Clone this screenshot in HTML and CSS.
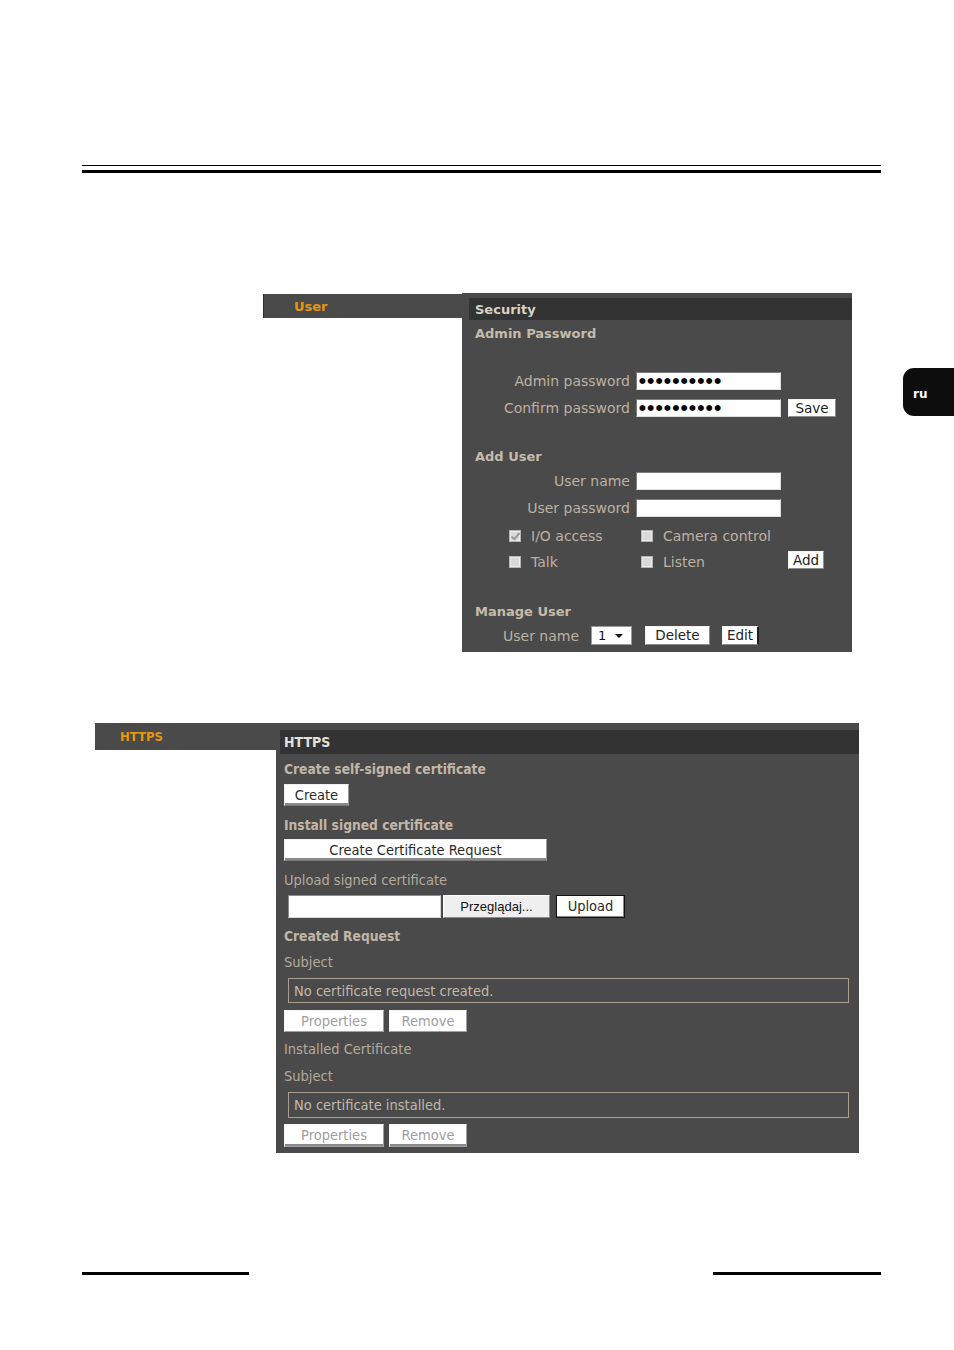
FILE: index.html
```html
<!DOCTYPE html>
<html lang="pl">
<head>
<meta charset="utf-8">
<title>Security / HTTPS</title>
<link rel="stylesheet" href="styles.css">
</head>
<body>
<div class="page">
  <div class="rule-top">
    <div class="rule-thin"></div>
    <div class="rule-thick"></div>
  </div>

  <div class="lang-tab">ru</div>

  <!-- User settings -->
  <div class="fig fig-user">
    <div class="tab tab-user">User</div>
    <div class="panel panel-user">
      <div class="bar bar-user">Security</div>
      <div class="u-title u-title-admin">Admin Password</div>

      <div class="frow frow-admin">
        <span class="lbl">Admin password</span>
        <span class="field pw">●●●●●●●●●●</span>
      </div>
      <div class="frow frow-confirm">
        <span class="lbl">Confirm password</span>
        <span class="field pw">●●●●●●●●●●</span>
        <span class="btn btn-save">Save</span>
      </div>

      <div class="u-title u-title-add">Add User</div>
      <div class="frow frow-uname">
        <span class="lbl">User name</span>
        <span class="field"></span>
      </div>
      <div class="frow frow-upass">
        <span class="lbl">User password</span>
        <span class="field"></span>
      </div>

      <div class="crow crow-1">
        <span class="citem"><span class="chk checked"></span><span class="ctext">I/O access</span></span>
        <span class="citem"><span class="chk"></span><span class="ctext">Camera control</span></span>
      </div>
      <div class="crow crow-2">
        <span class="citem"><span class="chk"></span><span class="ctext">Talk</span></span>
        <span class="citem citem-short"><span class="chk"></span><span class="ctext">Listen</span></span>
        <span class="btn btn-add">Add</span>
      </div>

      <div class="u-title u-title-manage">Manage User</div>
      <div class="mrow">
        <span class="mlbl">User name</span>
        <span class="select"><span class="sel-val">1</span><span class="sel-arrow"></span></span>
        <span class="btn btn-delete">Delete</span>
        <span class="btn btn-edit">Edit</span>
      </div>
    </div>
  </div>

  <!-- HTTPS settings -->
  <div class="fig fig-https">
    <div class="tab tab-https">HTTPS</div>
    <div class="panel panel-https">
      <div class="bar bar-https">HTTPS</div>
      <div class="h-body">
        <div class="h-title h-t1">Create self-signed certificate</div>
        <div class="hbtn hbtn-create">Create</div>
        <div class="h-title h-t2">Install signed certificate</div>
        <div class="hbtn hbtn-ccr">Create Certificate Request</div>
        <div class="h-text h-upload">Upload signed certificate</div>
        <div class="file-row">
          <span class="file-field"></span>
          <span class="file-browse">Przeglądaj...</span>
          <span class="hbtn hbtn-upload">Upload</span>
        </div>
        <div class="h-title h-t3">Created Request</div>
        <div class="h-text h-subj1">Subject</div>
        <div class="subject-box">No certificate request created.</div>
        <div class="pr-row pr-row-1">
          <span class="hbtn dis dis-props">Properties</span>
          <span class="hbtn dis dis-remove">Remove</span>
        </div>
        <div class="h-text h-installed">Installed Certificate</div>
        <div class="h-text h-subj2">Subject</div>
        <div class="subject-box subject-box-2">No certificate installed.</div>
        <div class="pr-row pr-row-2">
          <span class="hbtn dis dis-props lined">Properties</span>
          <span class="hbtn dis dis-remove lined">Remove</span>
        </div>
      </div>
    </div>
  </div>

  <div class="rule-bottom">
    <div class="rb rb-left"></div>
    <div class="rb rb-right"></div>
  </div>
</div>
</body>
</html>
```

FILE: styles.css
```css
html, body {
  margin: 0;
  padding: 0;
  background: #ffffff;
}

.page {
  position: relative;
  width: 954px;
  height: 1350px;
  overflow: hidden;
  font-family: "DejaVu Sans", Verdana, sans-serif;
}

/* header rules */
.rule-top {
  margin: 165px 0 0 82px;
  width: 799px;
}
.rule-thin {
  height: 1px;
  background: #000;
}
.rule-thick {
  height: 3px;
  margin-top: 4px;
  background: #000;
}

/* language tab on the right edge */
.lang-tab {
  position: absolute;
  left: 903px;
  top: 368px;
  width: 51px;
  height: 48px;
  box-sizing: border-box;
  padding-left: 10px;
  background: #0d0d0d;
  border-radius: 11px 0 0 11px;
  color: #fff;
  font: bold 12px/53px "DejaVu Sans", sans-serif;
}

/* figure layout */
.fig {
  display: flex;
  align-items: flex-start;
}
.tab {
  background: #4a4a4a;
  color: #e8960e;
  font-weight: bold;
  box-sizing: border-box;
}
.panel {
  background: #4a4a4a;
  box-sizing: border-box;
}
.bar {
  background: #333333;
  font-weight: bold;
}

/* ---------- User panel ---------- */
.fig-user {
  margin: 120px 0 0 263px;
}
.tab-user {
  width: 199px;
  height: 24px;
  margin-top: 1px;
  border-left: 1px solid #1d2b55;
  padding-left: 30px;
  font-size: 13px;
  line-height: 25px;
}
.panel-user {
  width: 390px;
  padding: 5px 0 7px 0;
  color: #bdb1a2;
  font-size: 14px;
}
.bar-user {
  margin-left: 7px;
  height: 22px;
  line-height: 23px;
  padding-left: 6px;
  color: #d9d1c5;
  font-size: 13px;
}
.u-title {
  padding-left: 13px;
  font-weight: bold;
  font-size: 13px;
  color: #c6baa9;
  height: 20px;
  line-height: 21px;
}
.u-title-admin { margin-top: 3px; }
.u-title-add { margin-top: 29px; }
.u-title-manage { margin-top: 32px; }

.frow {
  display: flex;
  align-items: center;
  height: 18px;
}
.frow-admin { margin-top: 29px; }
.frow-confirm { margin-top: 9px; }
.frow-uname { margin-top: 6px; }
.frow-upass { margin-top: 9px; }

.lbl {
  width: 168px;
  text-align: right;
  margin-right: 6px;
  white-space: nowrap;
  line-height: 18px;
}
.field {
  width: 145px;
  height: 18px;
  box-sizing: border-box;
  background: #fff;
  border: 1px solid;
  border-color: #7c7c7c #dedede #dedede #7c7c7c;
  color: #000;
  font-size: 7.8px;
  line-height: 16px;
  padding-left: 2px;
  letter-spacing: 1.55px;
  overflow: hidden;
  white-space: nowrap;
}

.btn {
  height: 18px;
  box-sizing: border-box;
  background: #fff;
  border: 1px solid;
  border-color: #f4f4f4 #8c8c8c #8c8c8c #f4f4f4;
  color: #222;
  font-size: 13.5px;
  line-height: 16px;
  text-align: center;
}
.btn-save {
  width: 48px;
  margin-left: 7px;
}

.crow {
  display: flex;
  align-items: center;
  height: 18px;
  padding-left: 47px;
}
.crow-1 { margin-top: 10px; }
.crow-2 { margin-top: 6px; }
.crow-2 .citem { padding-top: 4px; }
.citem {
  display: flex;
  align-items: center;
  width: 132px;
}
.citem-short { width: 147px; }
.chk {
  width: 12px;
  height: 12px;
  box-sizing: border-box;
  border: 1px solid #b4b4b4;
  background: #d9d9d9;
  box-shadow: inset 0 0 0 1px #ececec;
  position: relative;
}
.chk.checked::after {
  content: "";
  position: absolute;
  left: 3px;
  top: 0px;
  width: 3px;
  height: 7px;
  border: solid #9a9a9a;
  border-width: 0 2px 2px 0;
  transform: rotate(40deg);
}
.ctext {
  margin-left: 10px;
  white-space: nowrap;
}
.btn-add {
  width: 36px;
}

.mrow {
  display: flex;
  align-items: center;
  height: 19px;
  margin-top: 5px;
  padding-left: 41px;
}
.mlbl {
  width: 88px;
  white-space: nowrap;
}
.select {
  width: 41px;
  height: 19px;
  box-sizing: border-box;
  background: #fff;
  border: 1px solid #9a9a9a;
  display: flex;
  align-items: center;
  padding-left: 6px;
  color: #111;
  font-size: 13px;
}
.sel-val { width: 17px; }
.sel-arrow {
  width: 0;
  height: 0;
  border-left: 4px solid transparent;
  border-right: 4px solid transparent;
  border-top: 4px solid #111;
}
.btn-delete {
  width: 65px;
  height: 19px;
  margin-left: 13px;
  line-height: 17px;
}
.btn-edit {
  width: 37px;
  height: 19px;
  margin-left: 12px;
  line-height: 17px;
  border-right: 2px solid #222;
}

/* ---------- HTTPS panel ---------- */
.fig-https {
  margin: 71px 0 0 95px;
}
.tab-https,
.panel-https {
  font-family: "DejaVu Sans Condensed", "DejaVu Sans", sans-serif;
  font-stretch: condensed;
}
.tab-https {
  width: 181px;
  height: 27px;
  padding-left: 25px;
  font-size: 13px;
  line-height: 27px;
}
.panel-https {
  width: 583px;
  padding: 7px 0 6px 0;
  color: #b4aa9c;
  font-size: 14.5px;
}
.bar-https {
  margin-left: 4px;
  height: 24px;
  line-height: 25px;
  padding-left: 4px;
  color: #e4e0da;
  font-size: 14px;
}
.h-body {
  padding-left: 8px;
  display: flex;
  flex-direction: column;
  align-items: flex-start;
}
.h-title {
  height: 20px;
  line-height: 20px;
  font-weight: bold;
  font-size: 13.7px;
  color: #c2b6a6;
}
.h-text {
  height: 20px;
  line-height: 20px;
}
.h-t1 { margin-top: 5px; }
.h-t2 { margin-top: 9px; }
.h-upload { margin-top: 9px; }
.h-t3 { margin-top: 8px; }
.h-subj1 { margin-top: 6px; }
.h-installed { margin-top: 7px; }
.h-subj2 { margin-top: 7px; }

.hbtn {
  display: block;
  height: 22px;
  box-sizing: border-box;
  background: #fff;
  border: 1px solid;
  border-color: #f0f0f0 #9a9a9a #7a7a7a #f0f0f0;
  color: #2a2a2a;
  font-size: 14.5px;
  line-height: 21px;
  text-align: center;
}
.hbtn-create {
  width: 65px;
  margin-top: 5px;
  box-shadow: inset 0 -2px 0 #8a8a8a;
}
.hbtn-ccr {
  width: 263px;
  margin-top: 4px;
  box-shadow: inset 0 -2px 0 #8a8a8a;
}

.file-row {
  display: flex;
  align-items: center;
  margin-top: 5px;
  margin-left: 4px;
  height: 23px;
}
.file-field {
  width: 153px;
  height: 23px;
  box-sizing: border-box;
  background: #fff;
  border: 1px solid;
  border-color: #8a8a8a #d8d8d8 #d8d8d8 #8a8a8a;
}
.file-browse {
  width: 107px;
  height: 23px;
  margin-left: 2px;
  box-sizing: border-box;
  background: #efefef;
  border: 1px solid;
  border-color: #fafafa #8a8a8a #8a8a8a #fafafa;
  color: #111;
  font: 13px/21px "Liberation Sans", Arial, sans-serif;
  text-align: center;
}
.hbtn-upload {
  width: 69px;
  height: 23px;
  margin-left: 6px;
  border: 1px solid #111;
  box-shadow: inset -1px -1px 0 #8a8a8a;
  line-height: 20px;
}

.subject-box {
  width: 561px;
  height: 25px;
  margin-top: 6px;
  margin-left: 4px;
  box-sizing: border-box;
  border: 1px solid #a89f91;
  padding-left: 5px;
  line-height: 24px;
  color: #c2b8aa;
  white-space: nowrap;
}
.subject-box-2 {
  height: 26px;
  line-height: 25px;
}

.pr-row {
  display: flex;
  margin-top: 7px;
}
.pr-row-2 { margin-top: 6px; }
.dis {
  color: #9e9e9e;
  border-color: #f6f6f6 #a0a0a0 #a0a0a0 #f6f6f6;
}
.dis-props { width: 100px; }
.dis-remove { width: 78px; margin-left: 5px; }
.lined {
  height: 23px;
  box-shadow: inset 0 -2px 0 #8a8a8a;
}

/* footer rules */
.rule-bottom {
  display: flex;
  justify-content: space-between;
  width: 799px;
  margin: 119px 0 0 82px;
}
.rb {
  height: 3px;
  background: #000;
}
.rb-left { width: 167px; }
.rb-right { width: 168px; }
```
